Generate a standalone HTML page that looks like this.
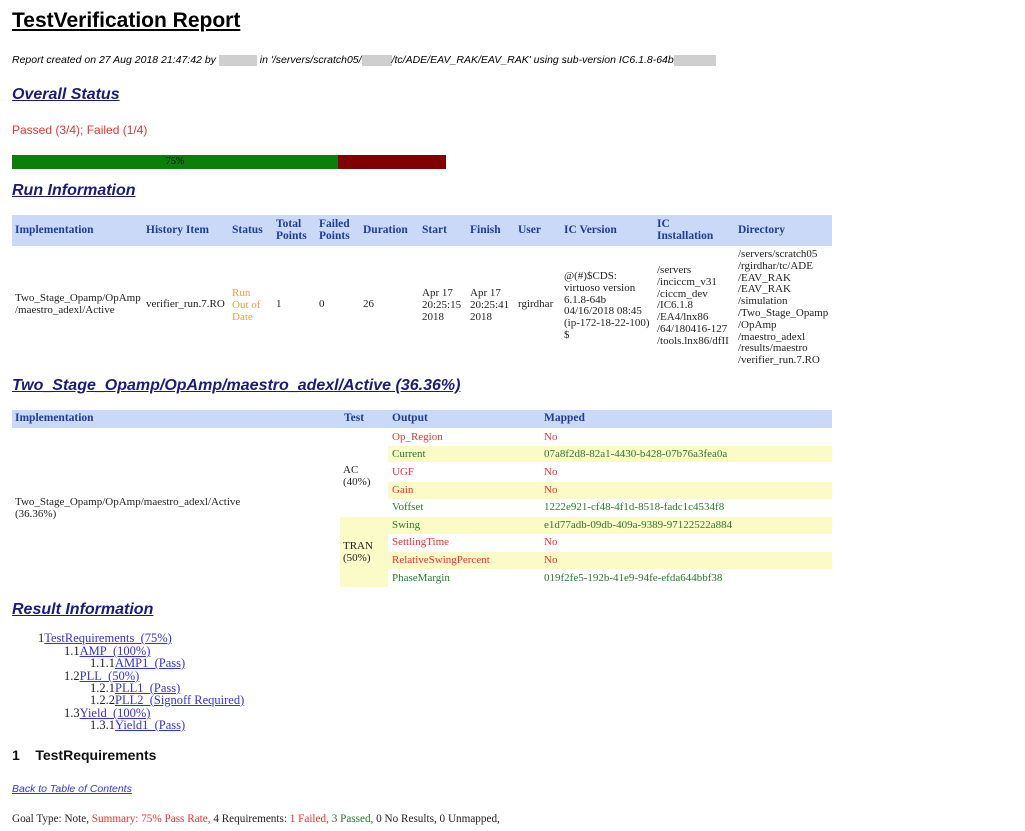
<!DOCTYPE html>
<html><head><meta charset="utf-8"><style>
body{margin:0;width:1025px;height:831px;background:#fff;position:relative;overflow:hidden;font-family:"Liberation Serif",serif;font-size:11px;color:#222}
.a{position:absolute;white-space:nowrap}
h2{position:absolute;margin:0;font:italic bold 16px "Liberation Sans",sans-serif;color:#1a1a80;text-decoration:underline;left:12px}
.hd{position:absolute;background:#c9d9f7;color:#1f3c9a;font-weight:bold;font-size:11.5px}
.hd span,.c{position:absolute;line-height:11.8px;white-space:nowrap}
.red{color:#f03030}.grn{color:#2a7a2a}.org{color:#f0a030}
.y{position:absolute;background:#fbfbc8}
a{color:#3333dd}
.blur{display:inline-block;background:#cfcfcf;height:11px;vertical-align:middle}
</style></head><body>
<div class="a" style="left:12px;top:9px;font:bold 21px 'Liberation Sans',sans-serif;color:#000;text-decoration:underline">TestVerification Report</div>
<div class="a" style="left:12px;top:54px;font:italic 10.5px 'Liberation Sans',sans-serif;color:#000">Report created on 27 Aug 2018 21:47:42 by <span class="blur" style="width:38px"></span> in '/servers/scratch05/<span class="blur" style="width:30px"></span>/tc/ADE/EAV_RAK/EAV_RAK' using sub-version IC6.1.8-64b<span class="blur" style="width:42px"></span></div>
<h2 style="top:86px">Overall Status</h2>
<div class="a" style="left:12px;top:123px;font:12px 'Liberation Sans',sans-serif;color:#f03030">Passed (3/4); Failed (1/4)</div>
<div class="a" style="left:12px;top:155px;width:326px;height:14px;background:#0a800a;text-align:center;font-size:10px;line-height:14px;color:#000">75%</div>
<div class="a" style="left:338px;top:155px;width:108px;height:14px;background:#800000"></div>
<h2 style="top:182px">Run Information</h2>
<div class="hd" style="left:12px;top:215px;width:820px;height:31px">
<span style="left:3px;top:10px">Implementation</span>
<span style="left:134px;top:10px">History Item</span>
<span style="left:220px;top:10px">Status</span>
<span style="left:264px;top:4px">Total<br>Points</span>
<span style="left:307px;top:4px">Failed<br>Points</span>
<span style="left:351px;top:10px">Duration</span>
<span style="left:410px;top:10px">Start</span>
<span style="left:458px;top:10px">Finish</span>
<span style="left:506px;top:10px">User</span>
<span style="left:552px;top:10px">IC Version</span>
<span style="left:645px;top:4px">IC<br>Installation</span>
<span style="left:726px;top:10px">Directory</span>
</div>
<div class="c" style="left:15px;top:293px">Two_Stage_Opamp/OpAmp<br>/maestro_adexl/Active</div>
<div class="c" style="left:146px;top:299px">verifier_run.7.RO</div>
<div class="c org" style="left:232px;top:288px">Run<br>Out of<br>Date</div>
<div class="c" style="left:276px;top:299px">1</div>
<div class="c" style="left:319px;top:299px">0</div>
<div class="c" style="left:363px;top:299px">26</div>
<div class="c" style="left:422px;top:288px">Apr 17<br>20:25:15<br>2018</div>
<div class="c" style="left:470px;top:288px">Apr 17<br>20:25:41<br>2018</div>
<div class="c" style="left:518px;top:299px">rgirdhar</div>
<div class="c" style="left:564px;top:271px">@(#)$CDS:<br>virtuoso version<br>6.1.8-64b<br>04/16/2018 08:45<br>(ip-172-18-22-100)<br>$</div>
<div class="c" style="left:657px;top:265px">/servers<br>/inciccm_v31<br>/ciccm_dev<br>/IC6.1.8<br>/EA4/lnx86<br>/64/180416-127<br>/tools.lnx86/dfII</div>
<div class="c" style="left:738px;top:249px">/servers/scratch05<br>/rgirdhar/tc/ADE<br>/EAV_RAK<br>/EAV_RAK<br>/simulation<br>/Two_Stage_Opamp<br>/OpAmp<br>/maestro_adexl<br>/results/maestro<br>/verifier_run.7.RO</div>
<h2 style="top:377px">Two_Stage_Opamp/OpAmp/maestro_adexl/Active (36.36%)</h2>
<div class="hd" style="left:12px;top:410px;width:820px;height:18px">
<span style="left:3px;top:3px">Implementation</span>
<span style="left:332px;top:3px">Test</span>
<span style="left:380px;top:3px">Output</span>
<span style="left:532px;top:3px">Mapped</span>
</div>
<div class="y" style="left:388px;top:446px;width:444px;height:16px"></div>
<div class="y" style="left:388px;top:482px;width:444px;height:17px"></div>
<div class="y" style="left:340px;top:517px;width:492px;height:17px"></div>
<div class="y" style="left:340px;top:534px;width:48px;height:53px"></div>
<div class="y" style="left:388px;top:552px;width:444px;height:17px"></div>
<div class="c" style="left:15px;top:497px">Two_Stage_Opamp/OpAmp/maestro_adexl/Active<br>(36.36%)</div>
<div class="c" style="left:343px;top:465px">AC<br>(40%)</div>
<div class="c" style="left:343px;top:541px">TRAN<br>(50%)</div>
<div class="c red" style="left:392px;top:432px">Op_Region</div><div class="c red" style="left:544px;top:432px">No</div>
<div class="c grn" style="left:392px;top:449px">Current</div><div class="c grn" style="left:544px;top:449px">07a8f2d8-82a1-4430-b428-07b76a3fea0a</div>
<div class="c red" style="left:392px;top:467px">UGF</div><div class="c red" style="left:544px;top:467px">No</div>
<div class="c red" style="left:392px;top:485px">Gain</div><div class="c red" style="left:544px;top:485px">No</div>
<div class="c grn" style="left:392px;top:502px">Voffset</div><div class="c grn" style="left:544px;top:502px">1222e921-cf48-4f1d-8518-fadc1c4534f8</div>
<div class="c grn" style="left:392px;top:520px">Swing</div><div class="c grn" style="left:544px;top:520px">e1d77adb-09db-409a-9389-97122522a884</div>
<div class="c red" style="left:392px;top:537px">SettlingTime</div><div class="c red" style="left:544px;top:537px">No</div>
<div class="c red" style="left:392px;top:555px">RelativeSwingPercent</div><div class="c red" style="left:544px;top:555px">No</div>
<div class="c grn" style="left:392px;top:573px">PhaseMargin</div><div class="c grn" style="left:544px;top:573px">019f2fe5-192b-41e9-94fe-efda644bbf38</div>
<h2 style="top:601px">Result Information</h2>
<div class="c" style="left:38px;top:633px;font-size:12.5px">1<a href="#">TestRequirements_(75%)</a></div>
<div class="c" style="left:64px;top:646px;font-size:12.5px">1.1<a href="#">AMP_(100%)</a></div>
<div class="c" style="left:90px;top:658px;font-size:12.5px">1.1.1<a href="#">AMP1_(Pass)</a></div>
<div class="c" style="left:64px;top:671px;font-size:12.5px">1.2<a href="#">PLL_(50%)</a></div>
<div class="c" style="left:90px;top:683px;font-size:12.5px">1.2.1<a href="#">PLL1_(Pass)</a></div>
<div class="c" style="left:90px;top:695px;font-size:12.5px">1.2.2<a href="#">PLL2_(Signoff Required)</a></div>
<div class="c" style="left:64px;top:708px;font-size:12.5px">1.3<a href="#">Yield_(100%)</a></div>
<div class="c" style="left:90px;top:720px;font-size:12.5px">1.3.1<a href="#">Yield1_(Pass)</a></div>
<div class="a" style="left:12px;top:747px;font:bold 14px 'Liberation Sans',sans-serif;color:#111">1&nbsp;&nbsp;&nbsp; TestRequirements</div>
<div class="a" style="left:12px;top:783px;font:italic 10.5px 'Liberation Sans',sans-serif"><a href="#">Back to Table of Contents</a></div>
<div class="a" style="left:12px;top:813px;font-size:11.2px">Goal Type: Note, <span class="red">Summary: 75% Pass Rate,</span> 4 Requirements: <span class="red">1 Failed,</span> <span class="grn">3 Passed,</span> 0 No Results, 0 Unmapped,</div>
</body></html>
